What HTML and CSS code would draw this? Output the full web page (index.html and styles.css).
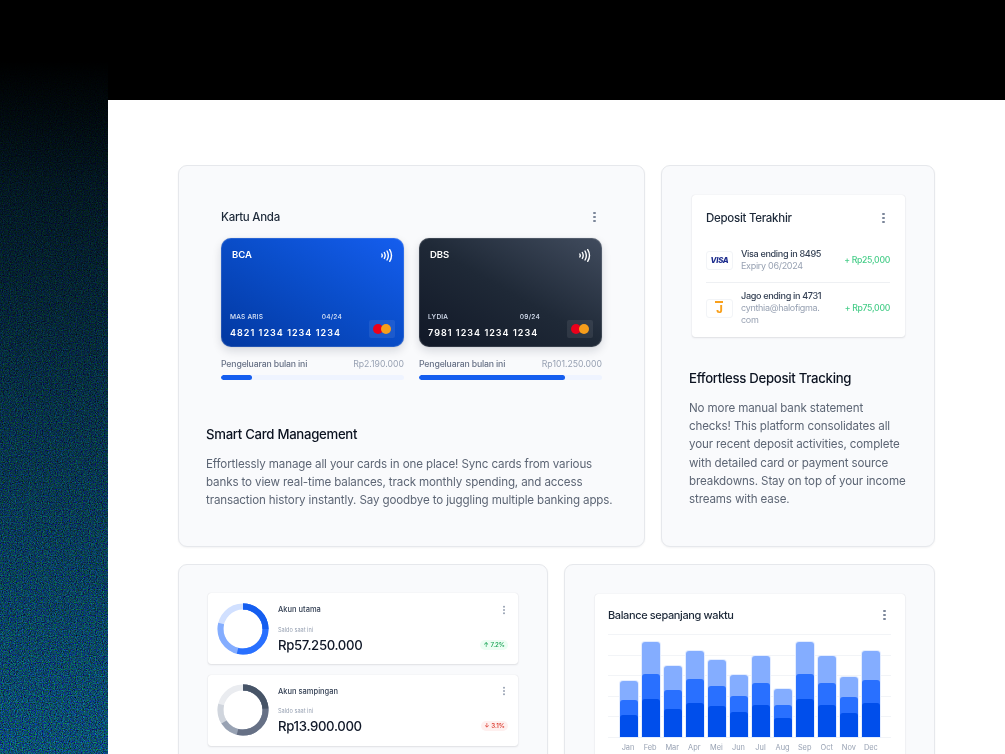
FILE: index.html
```html
<!DOCTYPE html>
<html lang="id">
<head>
<meta charset="utf-8">
<title>Card dashboard features</title>
<link rel="stylesheet" href="styles.css">
</head>
<body>
<svg class="noise" width="108" height="754" aria-hidden="true">
  <defs>
    <filter id="grain" x="0" y="0" width="100%" height="100%" color-interpolation-filters="sRGB">
      <feTurbulence type="fractalNoise" baseFrequency="0.85" numOctaves="2" seed="7"/>
      <feColorMatrix type="matrix" values="0.3 0 0 0 -0.1  0 0.9 0 0 -0.14  0 0 1.1 0 -0.1  0 0 0 0 1"/>
    </filter>
    <linearGradient id="fade" x1="0" y1="0" x2="0" y2="1">
      <stop offset="0.08" stop-color="#fff" stop-opacity="0"/>
      <stop offset="0.25" stop-color="#fff" stop-opacity="0.3"/>
      <stop offset="0.55" stop-color="#fff" stop-opacity="0.62"/>
      <stop offset="1" stop-color="#fff" stop-opacity="1"/>
    </linearGradient>
    <mask id="fadeMask"><rect width="108" height="754" fill="url(#fade)"/></mask>
  </defs>
  <rect width="108" height="754" filter="url(#grain)" mask="url(#fadeMask)"/>
</svg>

<main class="panel">
  <section class="row row-top">
    <article class="feature">
      <div class="cards-widget">
        <header class="widget-head"><h3 class="widget-title">Kartu Anda</h3><span class="kebab"></span></header>
        <div class="cards-grid">
          <div class="card-col">
            <div class="bank-card bank-blue">
              <div class="bank-top"><span class="bank-name">BCA</span>
                <svg class="nfc" viewBox="0 0 12 13" width="12" height="13"><g fill="none" stroke="#fff" stroke-width="1.4" stroke-linecap="round"><path d="M.8 5q.9 1.5 0 3"/><path d="M3.3 3.5q1.8 3 0 6"/><path d="M6 2q2.7 4.5 0 9"/><path d="M8.7 .7q3.6 5.8 0 11.6"/></g></svg>
              </div>
              <div class="bank-bottom">
                <div class="bank-info">
                  <div class="bank-meta"><span>MAS ARIS</span><span>04/24</span></div>
                  <div class="bank-number">4821 1234 1234 1234</div>
                </div>
                <div class="mc"><i class="mc-red"></i><i class="mc-orange"></i></div>
              </div>
            </div>
            <div class="spend"><span class="spend-label">Pengeluaran bulan ini</span><span class="spend-value">Rp2.190.000</span></div>
            <div class="track"><div class="fill" style="width:17%"></div></div>
          </div>
          <div class="card-col">
            <div class="bank-card bank-dark">
              <div class="bank-top"><span class="bank-name">DBS</span>
                <svg class="nfc" viewBox="0 0 12 13" width="12" height="13"><g fill="none" stroke="#fff" stroke-width="1.4" stroke-linecap="round"><path d="M.8 5q.9 1.5 0 3"/><path d="M3.3 3.5q1.8 3 0 6"/><path d="M6 2q2.7 4.5 0 9"/><path d="M8.7 .7q3.6 5.8 0 11.6"/></g></svg>
              </div>
              <div class="bank-bottom">
                <div class="bank-info">
                  <div class="bank-meta"><span>LYDIA</span><span>09/24</span></div>
                  <div class="bank-number">7981 1234 1234 1234</div>
                </div>
                <div class="mc"><i class="mc-red"></i><i class="mc-orange"></i></div>
              </div>
            </div>
            <div class="spend"><span class="spend-label">Pengeluaran bulan ini</span><span class="spend-value">Rp101.250.000</span></div>
            <div class="track"><div class="fill" style="width:80%"></div></div>
          </div>
        </div>
      </div>
      <div class="copy copy-wide">
        <h2 class="copy-title">Smart Card Management</h2>
        <p class="copy-text">Effortlessly manage all your cards in one place! Sync cards from various banks to view real-time balances, track monthly spending, and access transaction history instantly. Say goodbye to juggling multiple banking apps.</p>
      </div>
    </article>

    <article class="feature">
      <div class="widget deposit">
        <header class="widget-head deposit-head"><h3 class="widget-title">Deposit Terakhir</h3><span class="kebab"></span></header>
        <div class="deposit-row">
          <div class="pay-logo"><span class="visa">VISA</span></div>
          <div class="pay-info"><div class="pay-name">Visa ending in 8495</div><div class="pay-sub">Expiry 06/2024</div></div>
          <div class="pay-amount">+ Rp25,000</div>
        </div>
        <div class="deposit-row">
          <div class="pay-logo"><span class="jago"><i class="jago-dots"></i>J</span></div>
          <div class="pay-info"><div class="pay-name">Jago ending in 4731</div><div class="pay-sub">cynthia@halofigma.<br>com</div></div>
          <div class="pay-amount">+ Rp75,000</div>
        </div>
      </div>
      <div class="copy copy-narrow">
        <h2 class="copy-title">Effortless Deposit Tracking</h2>
        <p class="copy-text">No more manual bank statement<br>checks! This platform consolidates all your recent deposit activities, complete with detailed card or payment source breakdowns. Stay on top of your income streams with ease.</p>
      </div>
    </article>
  </section>

  <section class="row row-bottom">
    <article class="feature feature-accounts">
      <div class="widget account">
        <svg class="donut" viewBox="0 0 52 52" width="52" height="52">
          <g fill="none" stroke-width="6" transform="rotate(-90 26 26)">
            <circle cx="26" cy="26" r="22.5" pathLength="100" stroke="#d1e0ff"/>
            <circle cx="26" cy="26" r="22.5" pathLength="100" stroke="#84adff" stroke-dasharray="79 100"/>
            <circle cx="26" cy="26" r="22.5" pathLength="100" stroke="#2970ff" stroke-dasharray="54 100"/>
            <circle cx="26" cy="26" r="22.5" pathLength="100" stroke="#155eef" stroke-dasharray="25 100"/>
          </g>
        </svg>
        <div class="account-body">
          <div class="account-top"><span class="account-name">Akun utama</span><span class="kebab kebab-sm"></span></div>
          <div class="account-label">Saldo saat ini</div>
          <div class="account-bottom"><span class="account-value">Rp57.250.000</span><span class="badge badge-up">↑ 7.2%</span></div>
        </div>
      </div>
      <div class="widget account">
        <svg class="donut" viewBox="0 0 52 52" width="52" height="52">
          <g fill="none" stroke-width="6" transform="rotate(-90 26 26)">
            <circle cx="26" cy="26" r="22.5" pathLength="100" stroke="#eaecf0"/>
            <circle cx="26" cy="26" r="22.5" pathLength="100" stroke="#d0d5dd" stroke-dasharray="79 100"/>
            <circle cx="26" cy="26" r="22.5" pathLength="100" stroke="#98a2b3" stroke-dasharray="66 100"/>
            <circle cx="26" cy="26" r="22.5" pathLength="100" stroke="#667085" stroke-dasharray="54 100"/>
            <circle cx="26" cy="26" r="22.5" pathLength="100" stroke="#475467" stroke-dasharray="24 100"/>
          </g>
        </svg>
        <div class="account-body">
          <div class="account-top"><span class="account-name">Akun sampingan</span><span class="kebab kebab-sm"></span></div>
          <div class="account-label">Saldo saat ini</div>
          <div class="account-bottom"><span class="account-value">Rp13.900.000</span><span class="badge badge-down">↓ 3.1%</span></div>
        </div>
      </div>
    </article>

    <article class="feature feature-chart">
      <div class="widget chart">
        <header class="widget-head chart-head"><h3 class="widget-title chart-title">Balance sepanjang waktu</h3><span class="kebab"></span></header>
        <div class="plot">
          <div class="bar bar-light" style="height:56px"><div class="bar bar-mid" style="height:37px"><div class="bar bar-low" style="height:22px"></div></div></div>
          <div class="bar bar-light" style="height:95px"><div class="bar bar-mid" style="height:63px"><div class="bar bar-low" style="height:38px"></div></div></div>
          <div class="bar bar-light" style="height:71px"><div class="bar bar-mid" style="height:47px"><div class="bar bar-low" style="height:28px"></div></div></div>
          <div class="bar bar-light" style="height:86px"><div class="bar bar-mid" style="height:58px"><div class="bar bar-low" style="height:34px"></div></div></div>
          <div class="bar bar-light" style="height:77px"><div class="bar bar-mid" style="height:51px"><div class="bar bar-low" style="height:31px"></div></div></div>
          <div class="bar bar-light" style="height:62px"><div class="bar bar-mid" style="height:41px"><div class="bar bar-low" style="height:25px"></div></div></div>
          <div class="bar bar-light" style="height:81px"><div class="bar bar-mid" style="height:54px"><div class="bar bar-low" style="height:32px"></div></div></div>
          <div class="bar bar-light" style="height:48px"><div class="bar bar-mid" style="height:32px"><div class="bar bar-low" style="height:19px"></div></div></div>
          <div class="bar bar-light" style="height:95px"><div class="bar bar-mid" style="height:63px"><div class="bar bar-low" style="height:38px"></div></div></div>
          <div class="bar bar-light" style="height:81px"><div class="bar bar-mid" style="height:54px"><div class="bar bar-low" style="height:32px"></div></div></div>
          <div class="bar bar-light" style="height:60px"><div class="bar bar-mid" style="height:40px"><div class="bar bar-low" style="height:24px"></div></div></div>
          <div class="bar bar-light" style="height:86px"><div class="bar bar-mid" style="height:57px"><div class="bar bar-low" style="height:34px"></div></div></div>
        </div>
        <div class="months"><span>Jan</span><span>Feb</span><span>Mar</span><span>Apr</span><span>Mei</span><span>Jun</span><span>Jul</span><span>Aug</span><span>Sep</span><span>Oct</span><span>Nov</span><span>Dec</span></div>
      </div>
    </article>
  </section>
</main>
</body>
</html>
```

FILE: styles.css
```css
* { box-sizing: border-box; }
html, body { margin: 0; height: 754px; overflow: hidden; background: #000; }
body {
  position: relative;
  padding: 100px 0 0 108px;
  font-family: Inter, "Liberation Sans", sans-serif;
  color: #1d2939;
}
h2, h3, p { margin: 0; font-weight: 500; }

.noise { position: absolute; left: 0; top: 0; display: block; filter: blur(0.4px); }

.panel {
  position: relative;
  height: 654px;
  overflow: hidden;
  background: #fff;
  padding: 65px 70px 0;
  filter: blur(0.35px);
}
.row { display: grid; gap: 16px; }
.row-top { grid-template-columns: 467px 274px; height: 382px; margin-bottom: 17px; }
.row-bottom { grid-template-columns: 370px 371px; }

.feature {
  background: #f9fafc;
  border: 1px solid #e6e8ec;
  border-radius: 9px;
  box-shadow: 0 1px 2px rgba(16, 24, 40, .05);
  min-width: 0;
}

.widget {
  background: #fff;
  border-radius: 3px;
  box-shadow: 0 0 1px rgba(16, 24, 40, .14), 0 1px 2px rgba(16, 24, 40, .1);
}
.widget-head { display: flex; justify-content: space-between; align-items: center; }
.widget-title { font-size: 11.5px; line-height: 14px; color: #1d2939; letter-spacing: -.28px; }
.chart-title { font-size: 11px; letter-spacing: -.38px; }

.kebab {
  width: 2.4px;
  height: 2.4px;
  border-radius: 50%;
  background: #7a8599;
  box-shadow: 0 -4px 0 #7a8599, 0 4px 0 #7a8599;
  margin-right: 5.5px;
}
.kebab-sm { width: 2px; height: 2px; margin-right: 3px; background: #98a2b3; box-shadow: 0 -3.2px 0 #98a2b3, 0 3.2px 0 #98a2b3; }

/* Kartu Anda */
.cards-widget { margin: 44px 43px 0 42px; }
.cards-grid { display: grid; grid-template-columns: 183px 183px; gap: 15px; margin-top: 14px; }
.bank-card {
  height: 109px;
  border-radius: 10px;
  padding: 10px 9px 9px 9px;
  display: flex;
  flex-direction: column;
  justify-content: space-between;
  color: #fff;
  box-shadow: inset 0 0 0 1px rgba(255, 255, 255, .12), 0 4px 10px rgba(16, 24, 40, .14), 0 0 1px rgba(16, 24, 40, .3);
}
.bank-blue { background: linear-gradient(30deg, #0238a0 0%, #0a4ecb 55%, #155eef 100%); }
.bank-dark { background: linear-gradient(30deg, #111827 0%, #1f2937 50%, #414c5e 100%); }
.bank-top { display: flex; justify-content: space-between; align-items: flex-start; padding: 0 2px 0 2px; }
.bank-name { font-size: 9.5px; font-weight: 600; line-height: 14px; }
.nfc { display: block; margin-top: 1px; }
.bank-bottom { display: flex; justify-content: space-between; align-items: flex-end; }
.bank-info { width: 112px; }
.bank-meta {
  display: flex;
  justify-content: space-between;
  font-size: 6.6px;
  line-height: 9px;
  font-weight: 500;
  letter-spacing: .2px;
  color: #dbe4f5;
  margin-bottom: 5px;
}
.bank-number { font-size: 9px; line-height: 12px; font-weight: 600; letter-spacing: 1.03px; white-space: nowrap; margin-bottom: -1px; }
.mc {
  width: 26px;
  height: 18px;
  background: rgba(255, 255, 255, .08);
  border-radius: 2px;
  display: flex;
  justify-content: center;
  align-items: center;
}
.mc i { display: block; width: 10px; height: 10px; border-radius: 50%; }
.mc-red { background: #eb001b; }
.mc-orange { background: #f79e1b; margin-left: -2.5px; }
.spend { display: flex; justify-content: space-between; font-size: 8.7px; line-height: 12px; margin-top: 11px; }
.spend-label { color: #667085; font-weight: 500; letter-spacing: -.15px; }
.spend-value { color: #98a2b3; }
.track { height: 5px; border-radius: 3px; background: #eff4ff; margin-top: 5px; overflow: hidden; }
.fill { height: 100%; background: #155eef; border-radius: 3px; }

/* Copy */
.copy-title { font-size: 13.2px; line-height: 18px; color: #0b1220; letter-spacing: -.3px; }
.copy-text { font-size: 11.6px; line-height: 18.2px; letter-spacing: -.13px; color: #5d6675; font-weight: 400; margin-top: 12px; }
.copy-wide { margin: 45px 27px 0 27px; }
.copy-narrow { margin: 32px 26px 0 27px; }

/* Deposit */
.deposit { margin: 29px 29px 0 30px; padding: 16px 15px 0 14px; height: 142px; }
.deposit-head { height: 14px; margin-bottom: 13px; }
.deposit-row { display: flex; align-items: center; gap: 8px; min-height: 44px; }
.deposit-row + .deposit-row { border-top: 1px solid #eef0f3; padding-top: 7px; }
.deposit-row:first-of-type { height: 43px; }
.pay-logo {
  width: 27px;
  height: 19px;
  flex: none;
  border: 1px solid #f2f4f7;
  border-radius: 3px;
  display: flex;
  align-items: center;
  justify-content: center;
  background: #fff;
}
.visa { font-size: 7.7px; font-weight: 800; font-style: italic; color: #1a2a8c; letter-spacing: -.2px; }
.jago { position: relative; font-size: 11px; line-height: 11px; font-weight: 800; color: #f9a01b; padding-top: 2px; }
.jago-dots { position: absolute; left: -1px; top: -1px; width: 8px; height: 2px; background: repeating-linear-gradient(90deg, #f9a01b 0 1.6px, transparent 1.6px 2.1px); }
.pay-info { flex: 1; min-width: 0; }
.pay-name { font-size: 9.1px; line-height: 12px; font-weight: 500; color: #344054; letter-spacing: -.35px; }
.pay-sub { font-size: 9px; line-height: 12px; color: #98a2b3; letter-spacing: -.3px; }
.pay-amount { font-size: 8.7px; color: #47cd89; white-space: nowrap; font-weight: 500; letter-spacing: -.3px; }

/* Accounts */
.feature-accounts { padding: 28px 29px 0; height: 300px; }
.account { height: 71px; padding: 9px 10px 9px 9px; display: flex; gap: 9px; margin-bottom: 10.5px; align-items: center; }
.donut { display: block; flex: none; }
.account-body { flex: 1; min-width: 0; }
.account-top { display: flex; justify-content: space-between; align-items: center; height: 12px; }
.account-name { font-size: 7.5px; font-weight: 500; color: #344054; }
.account-label { font-size: 5.6px; line-height: 8px; color: #98a2b3; margin-top: 10px; }
.account-bottom { display: flex; justify-content: space-between; align-items: center; margin-top: 2px; }
.account-value { font-size: 13.2px; line-height: 18px; font-weight: 500; color: #101828; letter-spacing: -.33px; }
.badge { font-size: 6.2px; line-height: 10px; font-weight: 500; padding: 0 3px; border-radius: 5px; height: 10px; }
.badge-up { background: #ecfdf3; color: #12a150; }
.badge-down { background: #fef0ef; color: #d92d20; }

/* Chart */
.feature-chart { padding: 29px 29px 0 30px; height: 300px; }
.chart { padding: 15px 14px 0 13px; height: 220px; }
.chart-head { height: 12px; }
.plot {
  display: flex;
  align-items: flex-end;
  gap: 4px;
  height: 104px;
  padding: 0 11px 0 12px;
  margin-top: 13px;
  background: repeating-linear-gradient(180deg, #f2f4f7 0 1px, transparent 1px 20.5px);
  border-bottom: 1px solid #f2f4f7;
}
.plot > .bar { flex: 1; }
.bar { display: flex; align-items: flex-end; border-radius: 3px 3px 0 0; width: 100%; }
.bar-light { background: #84adff; box-shadow: 0 0 0 1px #e4edff; }
.bar-mid { background: #2970ff; }
.bar-low { background: #004eeb; }
.months { display: flex; gap: 4px; padding: 5px 11px 0 12px; margin-left: -1px; }
.months span { flex: 1; text-align: center; font-size: 7.4px; line-height: 10px; color: #98a2b3; }
```
